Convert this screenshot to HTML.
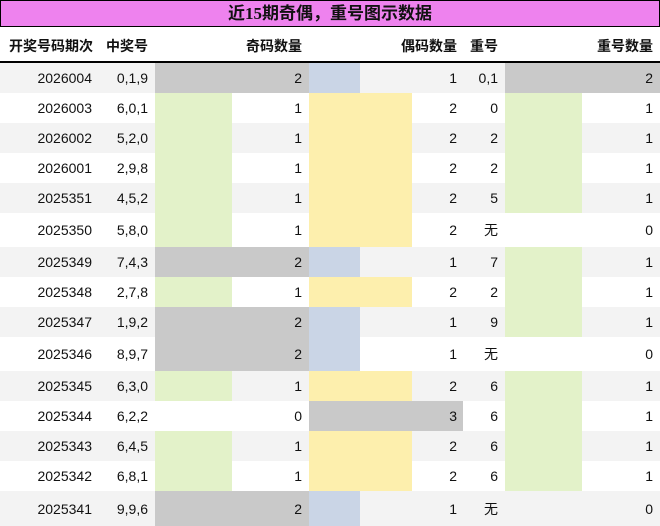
<!DOCTYPE html>
<html><head><meta charset="utf-8"><style>
*{margin:0;padding:0;box-sizing:border-box}
body{width:660px;height:526px;background:#fff;font-family:"Liberation Sans","Noto Sans CJK SC",sans-serif;font-size:14px;color:#111;position:relative;overflow:hidden}
.title{position:absolute;left:0;top:0;width:660px;height:27px;background:#ee82ee;border:1px solid #000;text-align:center;font-weight:bold;font-size:17px;line-height:25px;font-family:"Liberation Serif","Noto Sans CJK SC",sans-serif}
.hdr{position:absolute;left:0;top:27px;width:660px;height:36px;border-bottom:2px solid #000;font-weight:bold;font-size:14px}
.hdr span,.r span{position:absolute;text-align:right;white-space:nowrap}
.hdr span{top:9px}
.r{position:absolute;left:0;width:660px}
.r.o{background:#f3f3f3}
.r span{top:50%;transform:translateY(-50%)}
.b{position:absolute;top:0;bottom:0}
.g{background:#c9c9c9}.gr{background:#e3f2c9}.bl{background:#cad5e6}.y{background:#fdefad}
.c1{right:568px}.c2{right:512px}.c3{right:358px}.c4{right:203px}.c5{right:162px}.c6{right:7px}
</style></head><body>
<div class="title">近15期奇偶，重号图示数据</div>
<div class="hdr"><span class="c1" style="right:567px">开奖号码期次</span><span class="c2">中奖号</span><span class="c3">奇码数量</span><span class="c4">偶码数量</span><span class="c5">重号</span><span class="c6">重号数量</span></div>

<div class="r o" style="top:63px;height:30px"><div class="b g" style="left:155px;width:154px"></div><div class="b bl" style="left:309px;width:51px"></div><div class="b g" style="left:505px;width:155px"></div><span class="c1">2026004</span><span class="c2">0,1,9</span><span class="c3">2</span><span class="c4">1</span><span class="c5">0,1</span><span class="c6">2</span></div>
<div class="r" style="top:93px;height:30px"><div class="b gr" style="left:155px;width:77px"></div><div class="b y" style="left:309px;width:103px"></div><div class="b gr" style="left:505px;width:77px"></div><span class="c1">2026003</span><span class="c2">6,0,1</span><span class="c3">1</span><span class="c4">2</span><span class="c5">0</span><span class="c6">1</span></div>
<div class="r o" style="top:123px;height:30px"><div class="b gr" style="left:155px;width:77px"></div><div class="b y" style="left:309px;width:103px"></div><div class="b gr" style="left:505px;width:77px"></div><span class="c1">2026002</span><span class="c2">5,2,0</span><span class="c3">1</span><span class="c4">2</span><span class="c5">2</span><span class="c6">1</span></div>
<div class="r" style="top:153px;height:30px"><div class="b gr" style="left:155px;width:77px"></div><div class="b y" style="left:309px;width:103px"></div><div class="b gr" style="left:505px;width:77px"></div><span class="c1">2026001</span><span class="c2">2,9,8</span><span class="c3">1</span><span class="c4">2</span><span class="c5">2</span><span class="c6">1</span></div>
<div class="r o" style="top:183px;height:30px"><div class="b gr" style="left:155px;width:77px"></div><div class="b y" style="left:309px;width:103px"></div><div class="b gr" style="left:505px;width:77px"></div><span class="c1">2025351</span><span class="c2">4,5,2</span><span class="c3">1</span><span class="c4">2</span><span class="c5">5</span><span class="c6">1</span></div>
<div class="r" style="top:213px;height:34px"><div class="b gr" style="left:155px;width:77px"></div><div class="b y" style="left:309px;width:103px"></div><span class="c1">2025350</span><span class="c2">5,8,0</span><span class="c3">1</span><span class="c4">2</span><span class="c5">无</span><span class="c6">0</span></div>
<div class="r o" style="top:247px;height:30px"><div class="b g" style="left:155px;width:154px"></div><div class="b bl" style="left:309px;width:51px"></div><div class="b gr" style="left:505px;width:77px"></div><span class="c1">2025349</span><span class="c2">7,4,3</span><span class="c3">2</span><span class="c4">1</span><span class="c5">7</span><span class="c6">1</span></div>
<div class="r" style="top:277px;height:30px"><div class="b gr" style="left:155px;width:77px"></div><div class="b y" style="left:309px;width:103px"></div><div class="b gr" style="left:505px;width:77px"></div><span class="c1">2025348</span><span class="c2">2,7,8</span><span class="c3">1</span><span class="c4">2</span><span class="c5">2</span><span class="c6">1</span></div>
<div class="r o" style="top:307px;height:30px"><div class="b g" style="left:155px;width:154px"></div><div class="b bl" style="left:309px;width:51px"></div><div class="b gr" style="left:505px;width:77px"></div><span class="c1">2025347</span><span class="c2">1,9,2</span><span class="c3">2</span><span class="c4">1</span><span class="c5">9</span><span class="c6">1</span></div>
<div class="r" style="top:337px;height:34px"><div class="b g" style="left:155px;width:154px"></div><div class="b bl" style="left:309px;width:51px"></div><span class="c1">2025346</span><span class="c2">8,9,7</span><span class="c3">2</span><span class="c4">1</span><span class="c5">无</span><span class="c6">0</span></div>
<div class="r o" style="top:371px;height:30px"><div class="b gr" style="left:155px;width:77px"></div><div class="b y" style="left:309px;width:103px"></div><div class="b gr" style="left:505px;width:77px"></div><span class="c1">2025345</span><span class="c2">6,3,0</span><span class="c3">1</span><span class="c4">2</span><span class="c5">6</span><span class="c6">1</span></div>
<div class="r" style="top:401px;height:30px"><div class="b g" style="left:309px;width:154px"></div><div class="b gr" style="left:505px;width:77px"></div><span class="c1">2025344</span><span class="c2">6,2,2</span><span class="c3">0</span><span class="c4">3</span><span class="c5">6</span><span class="c6">1</span></div>
<div class="r o" style="top:431px;height:30px"><div class="b gr" style="left:155px;width:77px"></div><div class="b y" style="left:309px;width:103px"></div><div class="b gr" style="left:505px;width:77px"></div><span class="c1">2025343</span><span class="c2">6,4,5</span><span class="c3">1</span><span class="c4">2</span><span class="c5">6</span><span class="c6">1</span></div>
<div class="r" style="top:461px;height:30px"><div class="b gr" style="left:155px;width:77px"></div><div class="b y" style="left:309px;width:103px"></div><div class="b gr" style="left:505px;width:77px"></div><span class="c1">2025342</span><span class="c2">6,8,1</span><span class="c3">1</span><span class="c4">2</span><span class="c5">6</span><span class="c6">1</span></div>
<div class="r o" style="top:491px;height:35px"><div class="b g" style="left:155px;width:154px"></div><div class="b bl" style="left:309px;width:51px"></div><span class="c1">2025341</span><span class="c2">9,9,6</span><span class="c3">2</span><span class="c4">1</span><span class="c5">无</span><span class="c6">0</span></div>
</body></html>
